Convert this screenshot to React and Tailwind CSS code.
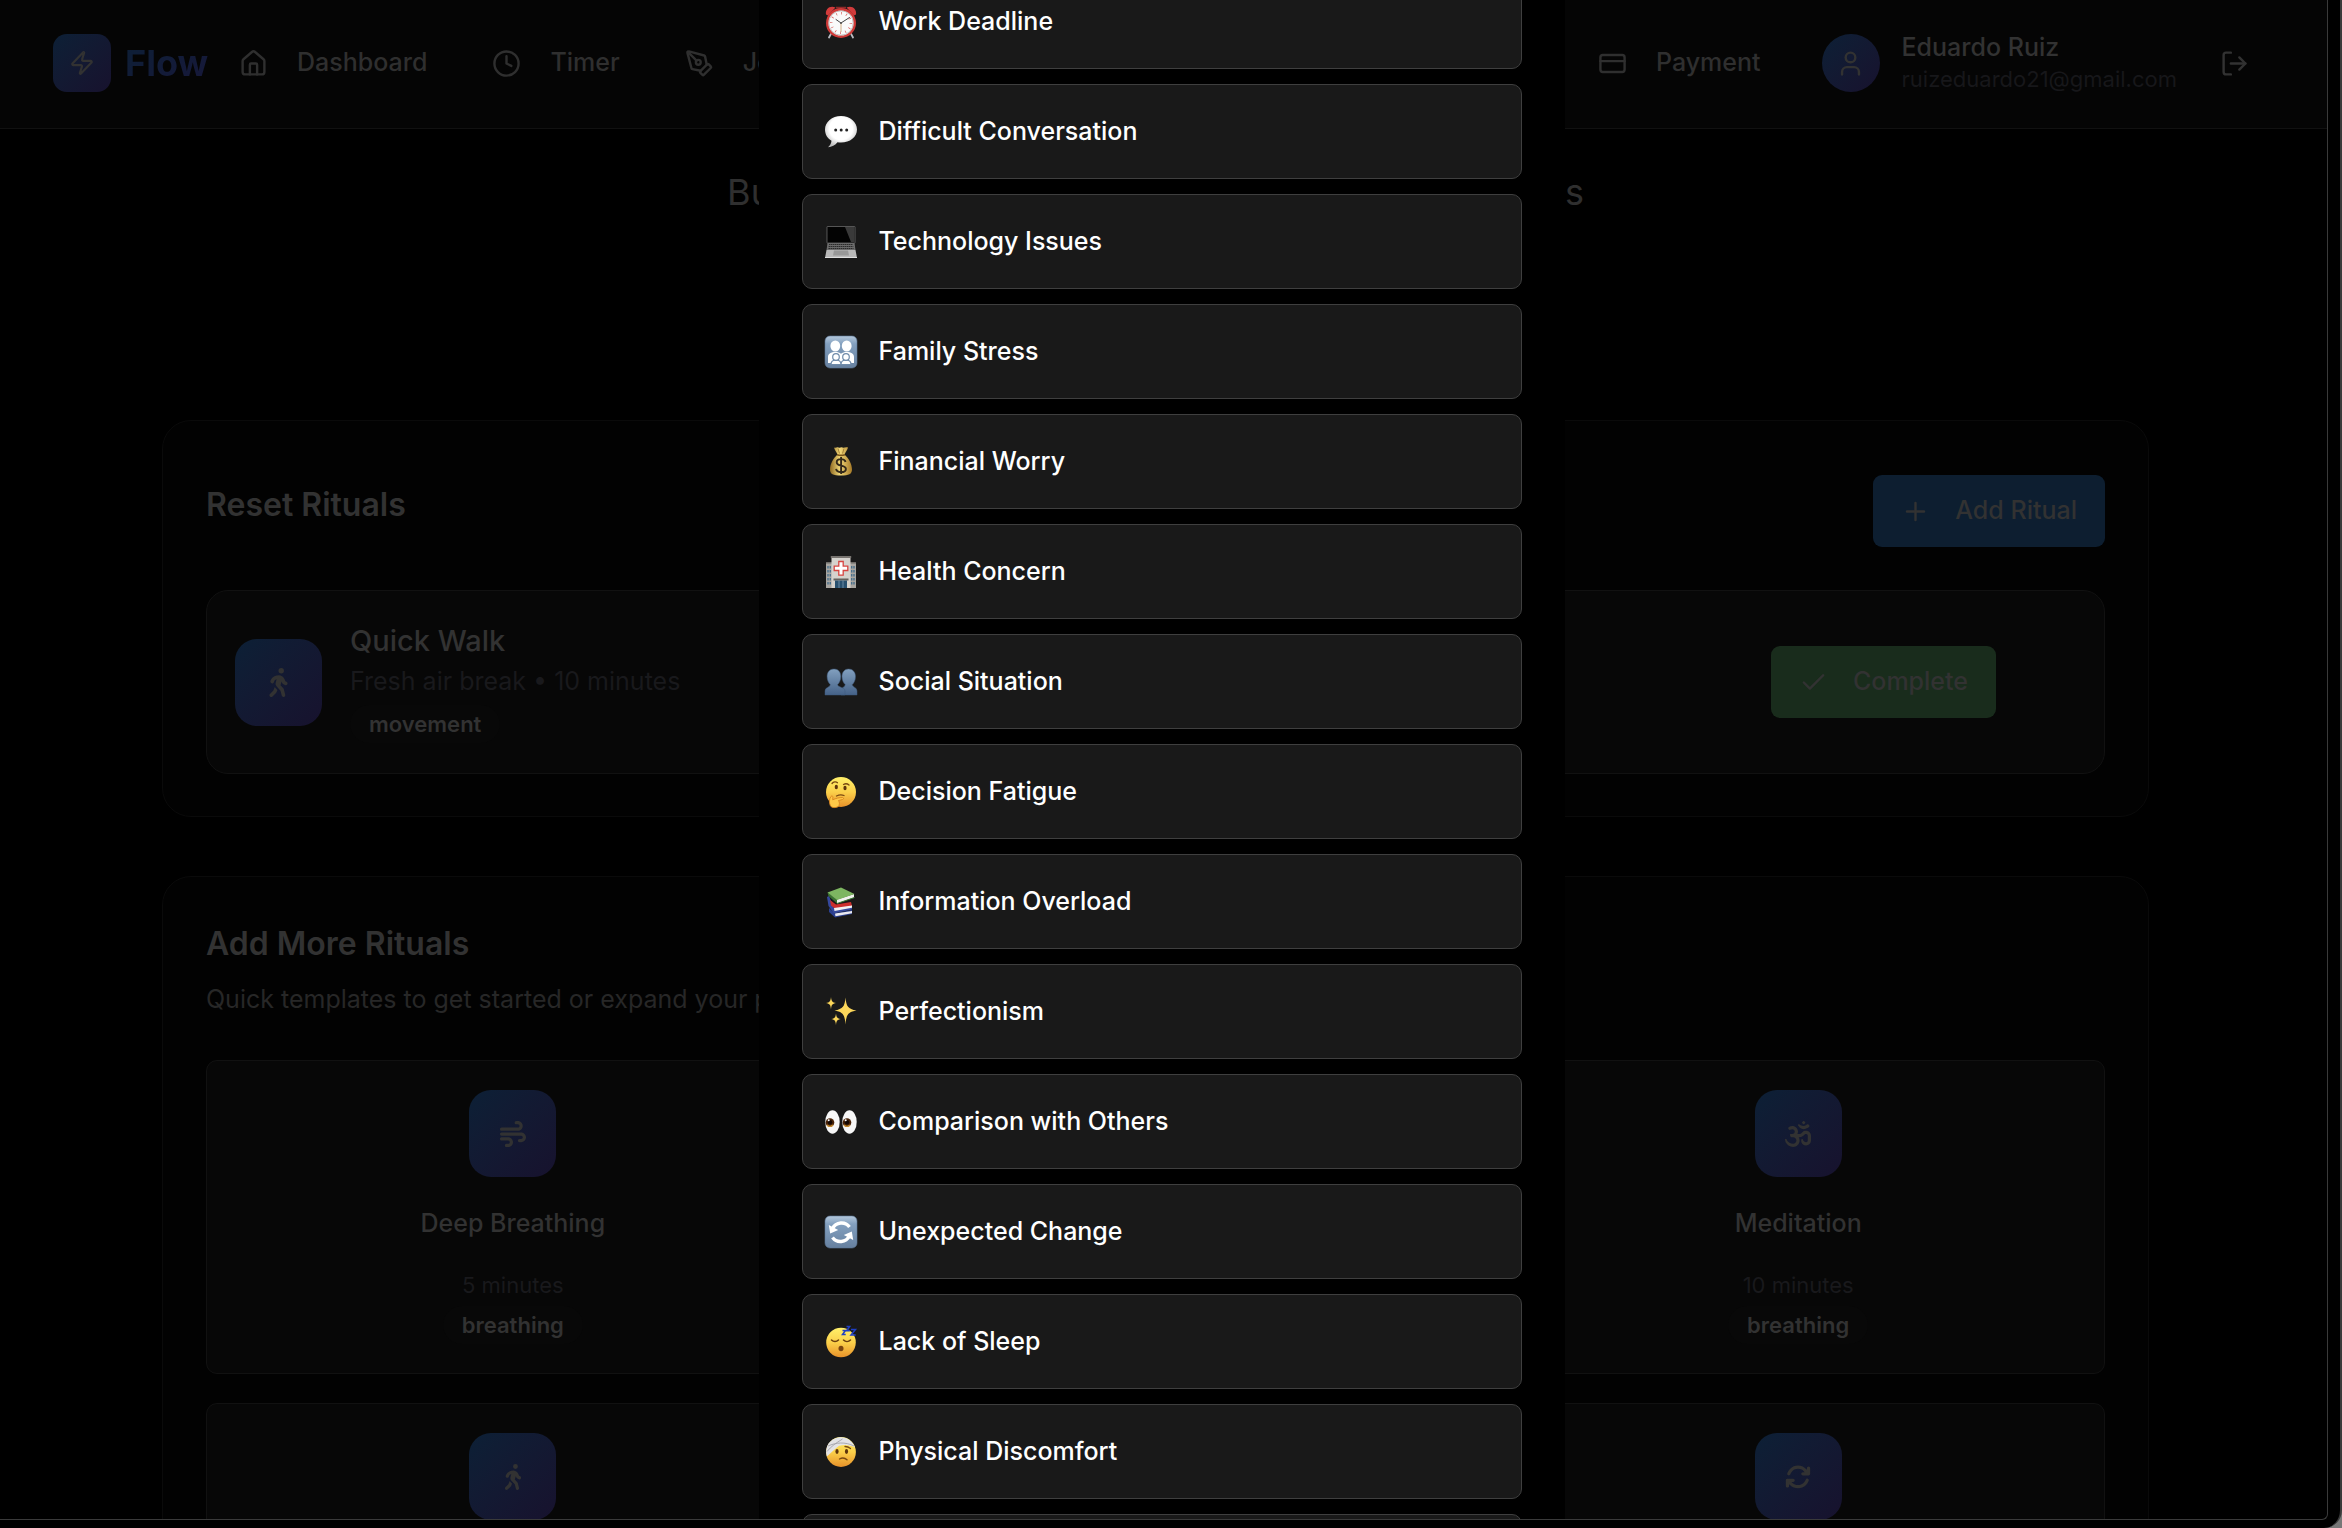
import React from "react";
import { Check, Clock, CreditCard, House, LogOut, PenTool, Plus, User, Zap } from "lucide-react";
import { FaArrowsRotate, FaOm, FaPersonWalking, FaWind } from "react-icons/fa6";

function Emoji({ children }) {
  return (
    <svg viewBox="0 0 32 32" className="size-8 shrink-0 overflow-visible" aria-hidden="true">
      <defs>
        <linearGradient id="face" x1="0" y1="0" x2="0" y2="1">
          <stop offset="0" stopColor="#fff06a" />
          <stop offset="0.5" stopColor="#fbd04a" />
          <stop offset="1" stopColor="#e8922a" />
        </linearGradient>
        <linearGradient id="tile" x1="0" y1="0" x2="0" y2="1">
          <stop offset="0" stopColor="#b4c8dc" />
          <stop offset="0.25" stopColor="#83a0bf" />
          <stop offset="1" stopColor="#66809f" />
        </linearGradient>
        <linearGradient id="bust" x1="0" y1="0" x2="0" y2="1">
          <stop offset="0" stopColor="#82a0bf" />
          <stop offset="1" stopColor="#456288" />
        </linearGradient>
        <linearGradient id="gold" x1="0" y1="0" x2="1" y2="0">
          <stop offset="0" stopColor="#8f6a22" />
          <stop offset="0.45" stopColor="#f2d878" />
          <stop offset="1" stopColor="#a67a28" />
        </linearGradient>
        <radialGradient id="bubble" cx="0.5" cy="0.4" r="0.6">
          <stop offset="0.6" stopColor="#ffffff" />
          <stop offset="1" stopColor="#bdbdbd" />
        </radialGradient>
      </defs>
      {children}
    </svg>
  );
}

const AlarmClock = () => (
  <Emoji>
    <path d="M7 26l-3 5.500M25 26l3 5.500" stroke="#b9bcc2" strokeWidth="1.800" strokeLinecap="round" />
    <path d="M1 8.500C0 3 5 -1 10.500 1.500L3 9.500zM31 8.500C32 3 27 -1 21.500 1.500L29 9.500z" fill="#d23b3b" />
    <path d="M11 1.500h10" stroke="#8d2a2a" strokeWidth="1.500" />
    <circle cx="16" cy="17" r="13.800" fill="#fafafa" stroke="#cf3a38" strokeWidth="2.400" />
    <circle cx="16" cy="17" r="12.200" fill="none" stroke="#9d9d9d" strokeWidth="0.600" />
    <circle cx="16" cy="17" r="9.800" fill="none" stroke="#d65b58" strokeWidth="2.600" strokeDasharray="0.7 4.430" />
    <path d="M16 17l-5-3.500M16 17l8.500-5.500" stroke="#444" strokeWidth="1" strokeLinecap="round" />
    <path d="M16 17v9" stroke="#c9a06a" strokeWidth="0.800" />
    <circle cx="16" cy="17" r="1" fill="#555" />
  </Emoji>
);

const Speech = () => (
  <Emoji>
    <path d="M16 0C7 0 0 6 0 13.500c0 5 2.600 9 6.500 11.200C6.300 27.500 4.800 29.500 3 31.300c3.500-.3 7.500-2.300 9.500-5 1.100.2 2.300.3 3.500.3 9 0 16-5.600 16-13.100S25 0 16 0z" fill="url(#bubble)" />
    <circle cx="10.700" cy="14" r="1.500" fill="#222" />
    <circle cx="16.200" cy="14" r="1.500" fill="#222" />
    <circle cx="21.700" cy="14" r="1.500" fill="#222" />
  </Emoji>
);

const Laptop = () => (
  <Emoji>
    <rect x="2" y="0.500" width="28" height="16.500" rx="0.500" fill="#030303" stroke="#777" strokeWidth="0.700" />
    <path d="M20 1h9.500v15H26z" fill="#3a3a3a" />
    <path d="M2.500 17h27l1 7h-29z" fill="#6b6b6b" />
    <path d="M4 18.500h24M3.700 20.500h24.600M3.500 22.500h25" stroke="#2b2b2b" strokeWidth="1.100" strokeDasharray="1.500 0.500" />
    <path d="M1.500 24h29l1.500 8H0z" fill="#b9b9b9" />
    <path d="M9 24.500h14l1 5H8z" fill="#989898" />
    <path d="M0 31h32v1H0z" fill="#dedede" />
  </Emoji>
);

const Family = () => (
  <Emoji>
    <rect width="32" height="32" rx="5" fill="url(#tile)" stroke="#5c7694" strokeWidth="0.600" />
    <g fill="#fff">
      <ellipse cx="10.300" cy="10" rx="4.900" ry="5.500" />
      <ellipse cx="21.700" cy="10" rx="4.900" ry="5.500" />
      <path d="M3 27v-6c0-3.500 3-5 7.300-5 2.400 0 4.500.5 5.700 1.800 1.200-1.300 3.300-1.800 5.700-1.800 4.300 0 7.300 1.500 7.300 5v6z" />
    </g>
    <g fill="#fff" stroke="#6f8baa" strokeWidth="1.200">
      <path d="M6 28.500c0-3 1.500-4.500 5-4.500s5 1.500 5 4.500zM16 28.500c0-3 1.500-4.500 5-4.500s5 1.500 5 4.500z" />
      <circle cx="11" cy="21" r="3.300" />
      <circle cx="21" cy="21" r="3.300" />
    </g>
  </Emoji>
);

const MoneyBag = () => (
  <Emoji>
    <path d="M9 1.500c2 .8 3-.8 4.500 0s2.500-.8 4 0 3-.8 5.500 0c-.5 2.500-2.500 4.500-3.500 7 4 3.500 7.500 9.500 7.500 15 0 4.500-3 6-11 6s-11-1.500-11-6c0-5.500 3.500-11.500 7.500-15C11.500 6 9.500 4 9 1.500z" fill="url(#gold)" />
    <path d="M12 8.700c2.500.9 5.500.9 8 0" stroke="#775318" strokeWidth="1.600" fill="none" />
    <path d="M13 2.500l1.500 5M19 2.500l-1.500 5" stroke="#94702a" strokeWidth="0.800" />
    <path d="M20.500 16c-.4-2-2-2.900-4.500-2.900-2.700 0-4.300 1.200-4.300 3.100 0 4.700 9.200 2.200 9.200 6.800 0 2-1.900 3.200-4.800 3.200s-4.700-1.200-5-3.300M16.100 11v17" stroke="#33291a" strokeWidth="1.900" fill="none" />
  </Emoji>
);

const Hospital = () => (
  <Emoji>
    <path d="M1 6.500h6V32H1zM25 6.500h6V32h-6z" fill="#a8a5a0" />
    <path d="M1 6h6v1.500H1zM25 6h6v1.500h-6z" fill="#6f6c68" />
    <path d="M3 10v20M29 10v20M5.300 10v20M26.700 10v20" stroke="#49708c" strokeWidth="1.400" strokeDasharray="2.500 1.500" />
    <rect x="6.500" y="1" width="19" height="31" fill="#d5d2cd" />
    <rect x="5.800" y="0" width="20.400" height="2" fill="#77736f" />
    <path d="M13.800 5.500h4.400v4.600h4.600v4.400h-4.600v4.600h-4.400v-4.600H9.200v-4.400h4.600z" fill="#fff" stroke="#d64541" strokeWidth="1.300" />
    <rect x="8.500" y="22.500" width="15" height="2" fill="#65615d" />
    <rect x="10" y="24.500" width="12" height="7.500" fill="#28506f" />
    <path d="M14 24.500V32M18 24.500V32" stroke="#86a5bb" strokeWidth="0.700" />
  </Emoji>
);

const Busts = () => (
  <Emoji>
    <g fill="url(#bust)" stroke="#3f5a7c" strokeWidth="0.500">
      <path d="M23.500 3c4.500 0 7 3.300 7 7.500 0 3.800-1.500 6.500-3.200 8 0 3 4.700 2.500 4.700 6.500v4H16v-4c0-4 4.200-3.500 4.200-6.500-1.700-1.500-3.200-4.200-3.200-8C17 6.300 19.500 3 23.500 3z" />
      <path d="M9 3c4.500 0 6.800 3.300 6.800 7.500 0 3.800-1.500 6.500-3.200 8 0 3 7.400 2.500 7.400 6.500v4H0v-4c0-4 5.300-3.500 5.300-6.500-1.700-1.500-3.200-4.200-3.200-8C2.100 6.300 4.500 3 9 3z" />
    </g>
  </Emoji>
);

const Thinking = () => (
  <Emoji>
    <circle cx="16" cy="16" r="15" fill="url(#face)" />
    <path d="M7 7.500c1.500-2 4-2 5.500-.8M18.500 8.500c2-1.200 4-.8 5.500.5" stroke="#7a4a12" strokeWidth="1.300" fill="none" strokeLinecap="round" />
    <ellipse cx="11.300" cy="11" rx="1.600" ry="2.200" fill="#5e340c" />
    <ellipse cx="20" cy="12" rx="1.600" ry="2.200" fill="#5e340c" />
    <path d="M11.500 20c3-1.500 5-1.500 7.500-.5" stroke="#7a4a12" strokeWidth="1.300" fill="none" strokeLinecap="round" />
    <path d="M5.500 30c-1.500-3-1.500-7 .5-9.500.8-1 2-.5 1.900.8l-.2 2.500c3-1.500 7-2.300 9.600-2.300 1.600 0 1.600 1.700.2 2l-4 1c1.300 1.500 1.300 5-.5 6.300C10.500 32 7 32 5.500 30z" fill="#ffc948" stroke="#d88420" strokeWidth="0.900" />
  </Emoji>
);

const Books = () => (
  <Emoji>
    <path d="M4 22l6 5.500 17-3.500v4l-17 3.500L4 26z" fill="#2b3f8f" />
    <path d="M10 27.500L27 25v2.300l-16.500 3z" fill="#e8e8ee" />
    <path d="M2 11l2-1 5 12 18-3v4.500L9 27.500 3.500 20z" fill="#35489c" />
    <path d="M5 14l6 4.500 15-2.500 1 4-16 3.500-5-4z" fill="#cc2f2c" />
    <path d="M9 22l18-2.500v2.300L9.500 25z" fill="#f2f2f2" />
    <path d="M2.500 6.500L12 13.500v4L3.500 10z" fill="#3a7332" />
    <path d="M12 13.500L29 8v3.500l-17 6z" fill="#f1f1ee" />
    <path d="M2.500 6.500L16 1.500 29.500 8 12 14z" fill="#7db661" />
    <path d="M12 17.500l17.500-6" stroke="#3f7e37" strokeWidth="1" />
  </Emoji>
);

const Sparkles = () => (
  <Emoji>
    <g fill="#fbd65a">
      <path d="M20.500 1.500c.8 9 2.500 11.500 11 13-8.500 1.500-10.200 4-11 14-.8-10-2.500-12.500-11-14 8.500-1.500 10.200-4 11-13z" />
      <path d="M6 1c.4 4.200 1.200 5.400 5 6-3.800.6-4.600 2-5 6.500C5.600 9 4.800 7.600 1 7c3.800-.6 4.600-1.800 5-6z" />
      <path d="M11 17.500c.4 3.800 1.200 5 4.800 5.600-3.600.6-4.400 2-4.800 6.100-.4-4.100-1.200-5.500-4.800-6.100 3.600-.6 4.400-1.800 4.800-5.600z" />
    </g>
  </Emoji>
);

const Eyes = () => (
  <Emoji>
    <ellipse cx="7.500" cy="16" rx="7.200" ry="11.800" fill="#f7f7f7" />
    <ellipse cx="24.500" cy="16" rx="7.200" ry="11.800" fill="#f7f7f7" />
    <circle cx="5" cy="16.500" r="4.300" fill="#4a2308" />
    <circle cx="22" cy="16.500" r="4.300" fill="#4a2308" />
    <path d="M2 19a4 4 0 0 0 6 0M19 19a4 4 0 0 0 6 0" stroke="#c58a2b" strokeWidth="1.300" fill="none" />
    <circle cx="5" cy="16.200" r="2.200" fill="#120602" />
    <circle cx="22" cy="16.200" r="2.200" fill="#120602" />
    <circle cx="3.700" cy="14.300" r="1" fill="#fff" />
    <circle cx="20.700" cy="14.300" r="1" fill="#fff" />
  </Emoji>
);

const Arrows = () => (
  <Emoji>
    <rect width="32" height="32" rx="5" fill="url(#tile)" stroke="#5c7694" strokeWidth="0.600" />
    <path d="M7.500 12.500C11 6 20 5 24.500 11" stroke="#fff" strokeWidth="3.400" fill="none" />
    <path d="M24.500 20C21 26.500 12 27.500 7.500 21.500" stroke="#fff" strokeWidth="3.400" fill="none" />
    <path d="M3.800 9l1.400 8.500 8-3.500zM28.200 24l-1.400-8.500-8 3.500z" fill="#fff" />
  </Emoji>
);

const Sleeping = () => (
  <Emoji>
    <circle cx="16" cy="16.500" r="14.800" fill="url(#face)" />
    <path d="M6.500 14c2 2 5 2 7 0M18.500 14c2 2 5 2 7 0" stroke="#6b3f0f" strokeWidth="1.500" fill="none" strokeLinecap="round" />
    <ellipse cx="16" cy="22.500" rx="2.500" ry="2.800" fill="#7a4510" />
    <path d="M17.500 4.500h3l-3 4h3.200M21.500.500h3.200l-3.200 4.200h3.400M26 3.500h4.500l-4.500 5.500h4.700" stroke="#1f3fc4" strokeWidth="1.500" fill="none" />
  </Emoji>
);

const Bandaged = () => (
  <Emoji>
    <circle cx="16" cy="16" r="14.900" fill="url(#face)" />
    <path d="M3.500 7.500C8 1 18 -1 24.500 4c3 2 4.500 5 5.500 7.500-4-2.500-10-3.200-16-1.800C9.500 13 5.500 17.500 1.800 20.500.5 16 1 11 3.500 7.500z" fill="#e3e3e6" />
    <path d="M3 10c8-3.500 17-4.500 26 0M2 15.500C6 10.500 11 7 17.500 3" stroke="#a4a4aa" strokeWidth="0.900" fill="none" />
    <ellipse cx="12" cy="15.500" rx="1.600" ry="2.400" fill="#5e340c" />
    <ellipse cx="21.500" cy="15.500" rx="1.600" ry="2.400" fill="#5e340c" />
    <path d="M20 10.500c2 0 4 .8 5.500 2" stroke="#7a4a12" strokeWidth="1.300" fill="none" strokeLinecap="round" />
    <path d="M14.500 23c2.500-1.300 5.500-1 7.500.8" stroke="#7a4a12" strokeWidth="1.400" fill="none" strokeLinecap="round" />
  </Emoji>
);

const triggers = [
  ["Work Deadline", AlarmClock],
  ["Difficult Conversation", Speech],
  ["Technology Issues", Laptop],
  ["Family Stress", Family],
  ["Financial Worry", MoneyBag],
  ["Health Concern", Hospital],
  ["Social Situation", Busts],
  ["Decision Fatigue", Thinking],
  ["Information Overload", Books],
  ["Perfectionism", Sparkles],
  ["Comparison with Others", Eyes],
  ["Unexpected Change", Arrows],
  ["Lack of Sleep", Sleeping],
  ["Physical Discomfort", Bandaged],
];

function NavLink({ icon: Icon, children }) {
  return (
    <a href="#" className="flex items-center gap-[29px] text-[25px] font-medium text-[#2f2f2f]">
      <Icon size={29} strokeWidth={2} />
      {children}
    </a>
  );
}

function Badge({ children }) {
  return (
    <span className="rounded-full bg-[#080808] px-[19px] py-1 text-[22px] leading-[30px] font-semibold text-[#323232]">
      {children}
    </span>
  );
}

function IconTile({ children }) {
  return (
    <div className="flex size-[87px] shrink-0 items-center justify-center rounded-[22px] bg-linear-to-br from-[#0c2036] to-[#17122e] text-[#323232]">
      {children}
    </div>
  );
}

function Template({ icon: Icon, label, name, minutes, tag }) {
  return (
    <button
      aria-label={label}
      className="flex h-[314px] flex-col items-center rounded-[11px] border border-[#111111] bg-[#070707] pt-[29px]"
    >
      <IconTile>
        <Icon size={26} />
      </IconTile>
      {name && (
        <>
          <span className="mt-[26px] text-[25px] leading-10 font-medium text-[#323232]">{name}</span>
          <span className="mt-[26px] mb-[5px] text-[22px] leading-8 text-[#19191c]">{minutes}</span>
          <Badge>{tag}</Badge>
        </>
      )}
    </button>
  );
}

function TriggerDialog() {
  return (
    <div className="absolute inset-0 flex justify-center overflow-hidden pr-1">
      <div role="dialog" aria-label="Triggers" className="flex w-[806px] flex-col bg-black px-[43px]">
        <ul className="-mt-[26px] flex flex-col gap-[15px]">
          {triggers.map(([label, Icon]) => (
            <li key={label}>
              <button className="flex h-[95px] w-full items-center gap-[22px] rounded-[10px] border border-[#3f3f3f] bg-[#191919] px-[22px] text-[25px] font-medium text-white">
                <Icon />
                {label}
              </button>
            </li>
          ))}
          <li>
            <button aria-label="Other" className="h-[95px] w-full rounded-[10px] border border-[#3f3f3f] bg-[#191919]" />
          </li>
        </ul>
      </div>
    </div>
  );
}

export default function App() {
  return (
    <div className="h-screen overflow-hidden bg-[#777777] font-['Inter',sans-serif]">
      <div className="h-full rounded-br-[18px] border-r-2 border-[#3a3a3a] bg-black pr-3 pb-2">
        <div className="relative h-full overflow-hidden rounded-br-md border-r border-b border-[#3a3a3a] bg-black">
          <header className="flex h-[129px] items-center border-b border-[#111111] bg-[#050505] pr-[78px] pb-0.5 pl-[53px]">
            <div className="flex size-[58px] items-center justify-center rounded-[14px] bg-linear-to-br from-[#0c2036] to-[#17122e] text-[#323232]">
              <Zap size={26} strokeWidth={2} />
            </div>
            <span className="ml-[14px] bg-linear-to-br from-[#0c2036] to-[#17173a] bg-clip-text text-[36px] font-bold text-transparent">
              Flow
            </span>
            <nav className="ml-[31px] flex flex-1 items-center gap-[65px]">
              <NavLink icon={House}>Dashboard</NavLink>
              <NavLink icon={Clock}>Timer</NavLink>
              <NavLink icon={PenTool}>Journal</NavLink>
            </nav>
            <NavLink icon={CreditCard}>Payment</NavLink>
            <div className="ml-[61px] flex size-[58px] items-center justify-center rounded-full bg-linear-to-br from-[#0c2036] to-[#17122e] text-[#323232]">
              <User size={29} strokeWidth={2} />
            </div>
            <div className="ml-[22px]">
              <div className="text-[25px] leading-8 font-medium text-[#323232]">Eduardo Ruiz</div>
              <div className="text-[22px] leading-8 text-[#17171a]">ruizeduardo21@gmail.com</div>
            </div>
            <button aria-label="Log out" className="ml-[43px] text-[#323232]">
              <LogOut size={29} strokeWidth={2} />
            </button>
          </header>

          <main className="pr-[178px] pl-[162px]">
            <p className="pt-[39px] text-center text-[36px] leading-[48px] text-[#2f2f2f]">
              Build more resilience with personal reset practices
            </p>

            <section className="mt-[204px] rounded-[29px] border border-[#0a0a0a] bg-[#020202] px-[43px] pt-[54px] pb-[42px]">
              <div className="flex items-start justify-between">
                <h2 className="pt-[6px] text-[32px] leading-[48px] font-semibold text-[#323232]">Reset Rituals</h2>
                <button className="flex h-[72px] items-center gap-[25px] rounded-[9px] bg-[#0d1e30] px-7 text-[25px] font-medium text-[#323232]">
                  <Plus size={29} strokeWidth={2} />
                  Add Ritual
                </button>
              </div>
              <div className="mt-[43px] flex h-[184px] items-center rounded-[22px] border border-[#111111] bg-[#070707] pr-[108px] pl-7">
                <IconTile>
                  <FaPersonWalking size={29} />
                </IconTile>
                <div className="ml-7 flex-1">
                  <h3 className="text-[29px] leading-10 font-medium text-[#323232]">Quick Walk</h3>
                  <p className="text-[25px] leading-10 text-[#19191c]">Fresh air break • 10 minutes</p>
                  <div className="mt-1 flex">
                    <Badge>movement</Badge>
                  </div>
                </div>
                <button className="flex h-[72px] items-center gap-[25px] rounded-[9px] bg-[#192c1c] px-7 text-[25px] font-medium text-[#323232]">
                  <Check size={29} strokeWidth={2} />
                  Complete
                </button>
              </div>
            </section>

            <section className="mt-[59px] rounded-[29px] border border-[#0a0a0a] bg-[#020202] px-[43px] py-[43px]">
              <h2 className="text-[32px] leading-[48px] font-semibold text-[#323232]">Add More Rituals</h2>
              <p className="mt-[11px] text-[25px] leading-10 text-[#272727]">
                Quick templates to get started or expand your practice
              </p>
              <div className="mt-[41px] grid grid-cols-3 gap-[29px]">
                <Template icon={FaWind} name="Deep Breathing" minutes="5 minutes" tag="breathing" />
                <div />
                <Template icon={FaOm} name="Meditation" minutes="10 minutes" tag="breathing" />
                <Template icon={FaPersonWalking} label="Walk template" />
                <div />
                <Template icon={FaArrowsRotate} label="Reset template" />
              </div>
            </section>
          </main>

          <TriggerDialog />
        </div>
      </div>
    </div>
  );
}
